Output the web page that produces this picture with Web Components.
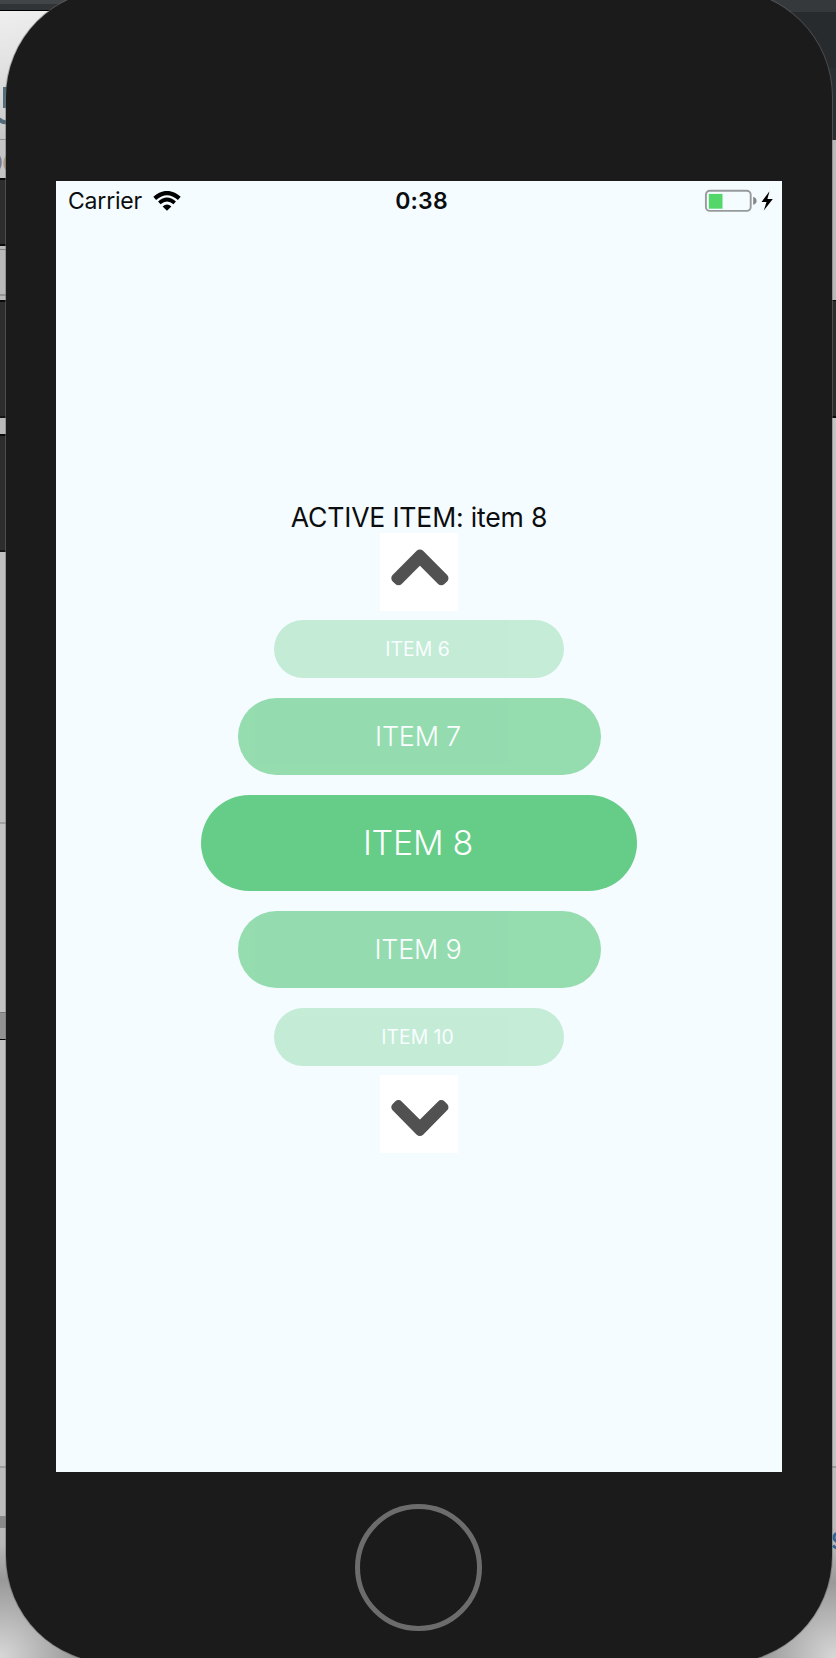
<!DOCTYPE html>
<html lang="en">
<head>
<meta charset="utf-8">
<title>Item picker</title>
<style>
html,body{margin:0;height:1658px;overflow:hidden;background:#1b1b1b}
body{font-family:Inter,"Liberation Sans",sans-serif}
</style>
</head>
<body>
<demo-stage>
  <desktop-strip slot="left" side="left"></desktop-strip>
  <desktop-strip slot="right" side="right"></desktop-strip>
  <phone-frame>
    <status-bar slot="status"></status-bar>
    <item-wheel></item-wheel>
  </phone-frame>
</demo-stage>
<script>
const define = (name, html, after) => customElements.define(name, class extends HTMLElement {
  constructor() {
    super();
    const t = document.createElement('template');
    t.innerHTML = html;
    this.attachShadow({mode: 'open'}).append(t.content.cloneNode(true));
  }
  connectedCallback() { if (after) after(this, this.shadowRoot); }
});

define('demo-stage', `<style>
:host{display:grid;grid-template:1658px / 836px;overflow:hidden}
.back,.front{grid-area:1/1;min-width:0}
.back{display:flex;justify-content:space-between}
.front{padding-left:6px;margin-top:-10px;z-index:1}
</style><div class="back"><slot name="left"></slot><slot name="right"></slot></div><div class="front"><slot></slot></div>`);

// Slices of the windows behind the phone: [height, background]
const strips = {
  left: [[4,'#414548'],[6,'#303437'],[1,'#000'],
    [128,'linear-gradient(165deg,#efefef 0,#e2e2e2 35%,#bdbdbd 100%)'],[1,'#929292'],[38,'#c5c5c5'],[2,'#080808'],
    [64,'#2d2d2d'],[2,'#090909'],[3,'#bababa'],[1,'#838383'],[44,'#b9b9b9'],[2,'#949494'],[4,'#b9b9b9'],[2,'#090909'],
    [114,'#2d2d2d'],[2,'#151515'],[16,'#bababa'],[2,'#090909'],
    [114,'#2d2d2d'],[2,'#151515'],[270,'#c0c0c0'],[2,'#a0a0a0'],[188,'#c3c3c3'],[1,'#777'],[26,'#929292'],[1,'#000'],
    [426,'#c3c3c3'],[2,'#a0a0a0'],[48,'#bdbdbd'],[12,'#8a8a8a'],
    [130,'radial-gradient(circle at 0 130px,#d8d8d8 0,#999 78px,#b9b9b9 115px)']],
  right: [[12,'#36393c'],[56,'#272b2e'],[72,'#2b2f32'],
    [160,'#b9b9b9'],[1,'#090909'],[115,'#2d2d2d'],[2,'#090909'],
    [1048,'#c3c3c3'],[2,'#9b9b9b'],[60,'#bcbcbc'],
    [130,'radial-gradient(circle at 100% 130px,#d8d8d8 0,#999 76px,#b9b9b9 115px)']]
};
define('desktop-strip', `<style>
:host{display:flex;flex-direction:column;width:110px;height:1658px;position:relative}
i{display:block;flex:none}
svg{position:absolute;top:0;left:0}
</style>`, (el, root) => {
  const side = el.getAttribute('side');
  for (const [h, bg] of strips[side]) {
    const i = document.createElement('i');
    i.style.cssText = 'height:' + h + 'px;background:' + bg;
    root.append(i);
  }
  const art = side === 'left'
    ? '<path d="M3 87h5v21H3z" fill="#526d7b"/><path d="M-1 119q3 4 9 3" fill="none" stroke="#526b79" stroke-width="4"/><path d="M-3 155a5 8 0 0 1 0 15" fill="none" stroke="#777d92" stroke-width="3"/><path d="M8 156a6 8 0 0 0 0 14" fill="none" stroke="#ac967e" stroke-width="3"/>'
    : '<path d="M111 1533.500q-3 1-3 4t4 4.500M107 1545.500q2 2.500 5 2.500" fill="none" stroke="#2f6596" stroke-width="3"/>';
  const t = document.createElement('template');
  t.innerHTML = '<svg width="110" height="1658">' + art + '</svg>';
  root.append(t.content);
});

define('phone-frame', `<style>
:host{display:flex;flex-direction:column;align-items:center;box-sizing:border-box;width:826px;height:1673px;padding-top:191px;border-radius:107px;background:#1b1b1b;box-shadow:0 0 0 1px rgba(110,110,110,.5)}
.screen{display:grid;grid-template:1291px / 726px;background:#f5fcff}
.screen>*{grid-area:1/1}
.status{align-self:start}
.content{display:flex;align-items:center;justify-content:center;padding-top:1px}
.home{box-sizing:border-box;width:127px;height:127px;margin:32px 2px 0 0;border:5.5px solid #6c6c6c;border-radius:50%}
</style><div class="screen"><div class="content"><slot></slot></div><div class="status"><slot name="status"></slot></div></div><div class="home"></div>`);

define('status-bar', `<style>
:host{display:grid;grid-template-columns:1fr auto 1fr;align-items:center;height:40px;padding:0 8px 0 12px;color:#0b0d0e;font-size:23px}
.left{display:flex;align-items:center;gap:11px;letter-spacing:-.2px}
.time{font-weight:600;font-size:23px;letter-spacing:.2px;padding-left:1px}
.right{display:flex;justify-content:flex-end}
svg{display:block}
</style>
<div class="left"><span>Carrier</span>
<svg width="28" height="21" viewBox="0 0 28 21" fill="none" stroke="#000"><path d="M1.700 7.400Q14-3.300 26.300 7.400" stroke-width="4.200"/><path d="M6.300 11.900Q14 5.100 21.700 11.900" stroke-width="3.700"/><path d="M9.600 15.400Q14 11.400 18.400 15.400L14 19.800Z" fill="#000" stroke="none"/></svg></div>
<div class="time">0:38</div>
<div class="right"><svg width="70" height="24" viewBox="0 0 70 24"><rect x="1.900" y="1.700" width="44.800" height="20.200" rx="4" fill="none" stroke="#979a9b" stroke-width="1.900"/><path d="M4.800 4.900h13.700v14.800H4.800z" fill="#53d769"/><path d="M49.200 7.800q3.400 1 3.400 4t-3.400 4z" fill="#83888a"/><path d="M65.500 2.300L57.500 13h5l-2.700 8.400L68.800 9.900h-5.400z" fill="#000"/></svg></div>`);

define('chevron-button', `<style>
:host{display:block;width:77.4px;height:77.4px;background:#fff}
svg{display:block}
:host([down]) svg{transform:scaleY(-1)}
</style><svg width="77.4" height="77.4" viewBox="0 0 77.4 77.4"><path d="M39.9 20.9L64 45.200 61.300 47.800 39.900 26.400 18.500 47.800 15.800 45.200Z" fill="#515151" stroke="#515151" stroke-width="9" stroke-linejoin="round"/></svg>`);

define('wheel-item', `<style>
:host{display:flex;align-items:center;justify-content:center;box-sizing:border-box;width:435.6px;height:96.8px;padding-right:2px;border-radius:49px;background:#66cd88;color:#fff;font-size:34px;font-weight:350;letter-spacing:-.25px;white-space:nowrap}
:host([level="1"]){width:363px;height:77.4px;font-size:27px;opacity:.67}
:host([level="2"]){width:290.4px;height:58.1px;padding-right:3px;font-size:19.4px;font-weight:400;letter-spacing:0;opacity:.34}
</style><slot></slot>`);

define('item-wheel', `<style>
:host{display:flex;flex-direction:column;align-items:center}
.label{height:32px;line-height:32px;font-size:26.6px;letter-spacing:-.18px;color:#0b0d0e;white-space:nowrap}
.items{display:flex;flex-direction:column;align-items:center;gap:19.36px;padding:9.7px 0}
</style>
<div class="label">ACTIVE ITEM: item 8</div>
<chevron-button></chevron-button>
<div class="items">
<wheel-item level="2">ITEM 6</wheel-item>
<wheel-item level="1">ITEM 7</wheel-item>
<wheel-item>ITEM 8</wheel-item>
<wheel-item level="1">ITEM 9</wheel-item>
<wheel-item level="2">ITEM 10</wheel-item>
</div>
<chevron-button down></chevron-button>`);
</script>
</body>
</html>
